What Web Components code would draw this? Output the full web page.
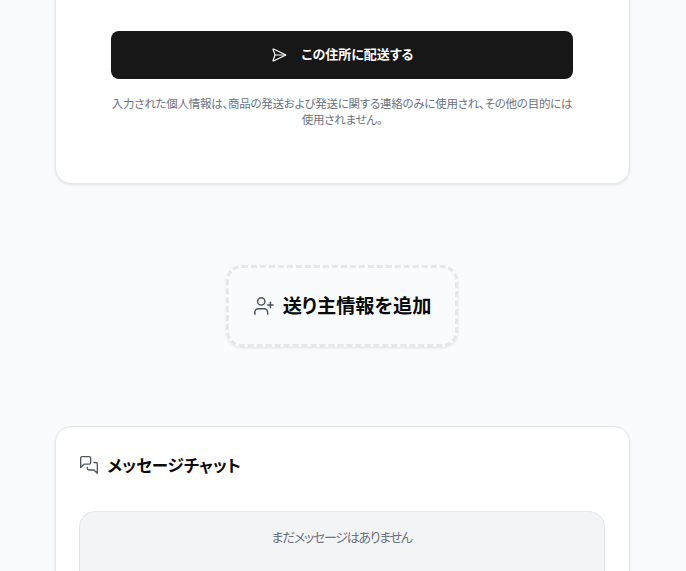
<!DOCTYPE html>
<html lang="ja">
<head>
<meta charset="utf-8">
<style>
  html, body { margin: 0; height: 571px; overflow: hidden; background: #fafbfc; }
  body { font-family: "Noto Sans CJK JP", sans-serif; font-feature-settings: "palt"; }
</style>
</head>
<body>
<page-shell>
  <address-card></address-card>
  <add-sender></add-sender>
  <chat-card></chat-card>
</page-shell>
<script>
class PageShell extends HTMLElement {
  constructor() {
    super();
    this.attachShadow({ mode: 'open' });
    this.shadowRoot.innerHTML = `
      <style>
        :host { display: flex; flex-direction: column; align-items: center; padding-right: 2px; }
      </style>
      <slot></slot>
    `;
  }
}

class AddressCard extends HTMLElement {
  constructor() {
    super();
    this.attachShadow({ mode: 'open' });
    this.shadowRoot.innerHTML = `
      <style>
        :host {
          display: flex;
          flex-direction: column;
          align-items: center;
          box-sizing: border-box;
          width: 575px;
          margin-top: -41px;
          padding: 71px 56px 56px;
          background: #fff;
          border: 1px solid #e5e7eb;
          border-radius: 16px;
          box-shadow: 0 1px 3px rgba(0,0,0,0.1);
        }
        button {
          display: flex;
          align-items: center;
          justify-content: center;
          gap: 15px;
          width: 462px;
          height: 48px;
          padding: 0 0 4px;
          border: 0;
          border-radius: 8px;
          background: #171717;
          color: #fff;
          font: 700 13px "Noto Sans CJK JP", sans-serif;
          font-feature-settings: "palt";
        }
        svg { width: 16px; height: 16px; margin-top: 4px; fill: none; stroke: currentColor; stroke-width: 1.75; stroke-linecap: round; stroke-linejoin: round; }
        p {
          margin: 16px 0 0;
          width: 462px;
          font-size: 11.5px;
          letter-spacing: -0.25px;
          line-height: 16px;
          color: #6b7280;
          text-align: center;
        }
      </style>
      <button>
        <svg viewBox="0 0 24 24"><path d="M3.714 3.048a.498.498 0 0 0-.683.627l2.843 7.627a2 2 0 0 1 0 1.396l-2.842 7.627a.498.498 0 0 0 .682.627l18-8.5a.5.5 0 0 0 0-.904z"/><path d="M6 12h16"/></svg>
        <span>この住所に配送する</span>
      </button>
      <p>入力された個人情報は、商品の発送および発送に関する連絡のみに使用され、その他の目的には<br>使用されません。</p>
    `;
  }
}

class AddSender extends HTMLElement {
  constructor() {
    super();
    this.attachShadow({ mode: 'open' });
    this.shadowRoot.innerHTML = `
      <style>
        :host {
          display: flex;
          align-items: center;
          justify-content: center;
          gap: 8px;
          box-sizing: border-box;
          width: 232px;
          height: 82px;
          margin-top: 81px;
          padding-bottom: 3px;
          background: #fafbfc;
          border: 3px dashed #e5e7eb;
          border-radius: 16px;
          box-shadow: 0 1px 3px rgba(0,0,0,0.1);
        }
        svg { width: 22px; height: 22px; margin-top: 3px; fill: none; stroke: #4b5563; stroke-width: 1.6; stroke-linecap: round; stroke-linejoin: round; }
        h3 { margin: 0; font-size: 19.2px; font-weight: 700; color: #0a0a0a; }
      </style>
      <svg viewBox="0 0 24 24"><path d="M16 21v-2a4 4 0 0 0-4-4H6a4 4 0 0 0-4 4v2"/><circle cx="9" cy="7" r="4"/><path d="M19 8v6"/><path d="M22 11h-6"/></svg>
      <h3>送り主情報を追加</h3>
    `;
  }
}

class ChatCard extends HTMLElement {
  constructor() {
    super();
    this.attachShadow({ mode: 'open' });
    this.shadowRoot.innerHTML = `
      <style>
        :host {
          display: block;
          box-sizing: border-box;
          width: 575px;
          margin-top: 79px;
          padding: 24px 24px 24px 23px;
          background: #fff;
          border: 1px solid #e5e7eb;
          border-radius: 16px;
          box-shadow: 0 1px 3px rgba(0,0,0,0.1);
        }
        header { display: flex; align-items: center; gap: 9px; height: 28px; }
        svg { width: 20px; height: 20px; fill: none; stroke: #4b5563; stroke-width: 1.6; stroke-linecap: round; stroke-linejoin: round; }
        h3 { margin: 0; font-size: 16.5px; font-weight: 700; color: #0a0a0a; }
        .log {
          box-sizing: border-box;
          height: 300px;
          margin-top: 32px;
          padding-top: 15px;
          background: #f3f4f6;
          border: 1px solid #e5e7eb;
          border-radius: 16px;
          text-align: center;
          font-size: 13px;
          line-height: 20px;
          letter-spacing: -1.3px;
          color: #6b7280;
        }
      </style>
      <header>
        <svg viewBox="0 0 24 24"><path d="M14 9a2 2 0 0 1-2 2H6l-4 4V4a2 2 0 0 1 2-2h8a2 2 0 0 1 2 2z"/><path d="M18 9h2a2 2 0 0 1 2 2v11l-4-4h-6a2 2 0 0 1-2-2v-1"/></svg>
        <h3>メッセージチャット</h3>
      </header>
      <div class="log">まだメッセージはありません</div>
    `;
  }
}

customElements.define('page-shell', PageShell);
customElements.define('address-card', AddressCard);
customElements.define('add-sender', AddSender);
customElements.define('chat-card', ChatCard);
</script>
</body>
</html>
